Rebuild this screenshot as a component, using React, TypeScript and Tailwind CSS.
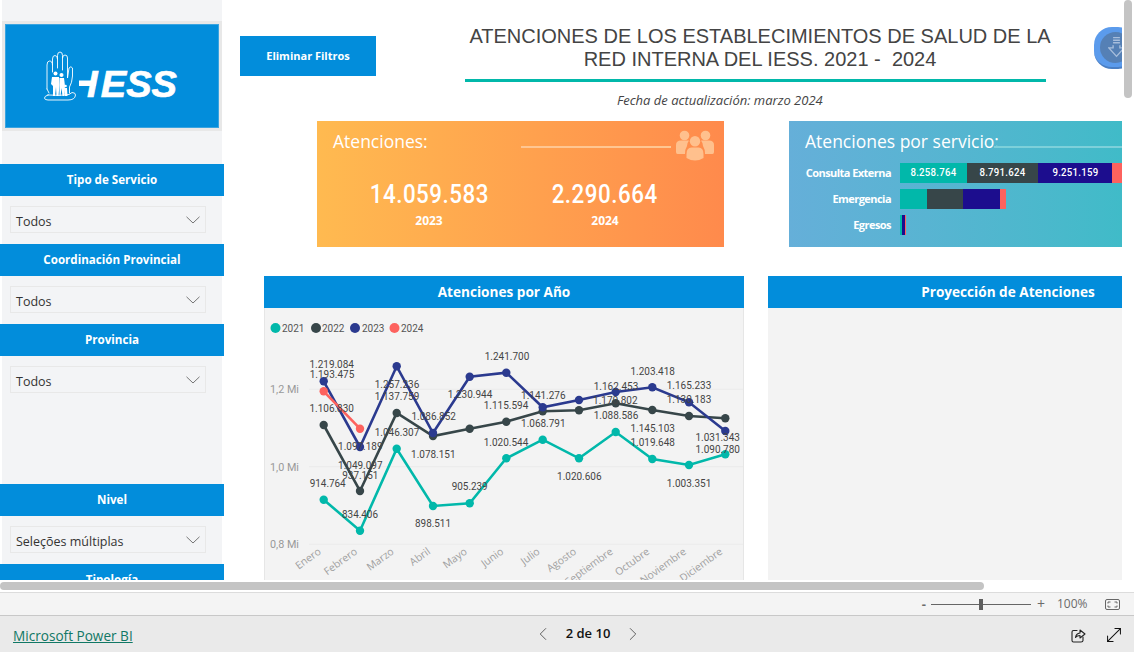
import React from "react";
import { ChevronLeft, ChevronRight, MoveDiagonal } from "lucide-react";

const DIN = "font-['Roboto','Liberation_Sans',sans-serif]";
const X = [323.7, 360, 396.7, 433, 469.7, 506.3, 542.7, 579, 615.7, 652.3, 689, 725.3];
const MONTHS = ["Enero", "Febrero", "Marzo", "Abril", "Mayo", "Junio", "Julio", "Agosto", "Septiembre", "Octubre", "Noviembre", "Diciembre"];
const SERIES = [
  { c: "#01b8aa", y: [499.7, 530.7, 448.7, 506, 503.3, 458.3, 439.7, 458.3, 432, 459, 465, 454.3] },
  { c: "#374649", y: [425, 491, 413, 436, 428.7, 421.7, 411.3, 410.3, 403.3, 410, 416, 418.3] },
  { c: "#2b3a8f", y: [381.3, 447, 366.3, 433, 376.7, 372.7, 407.3, 400, 392, 387.3, 402.3, 431] },
  { c: "#fd625e", y: [391.3, 428.7] },
];
const LABELS: [string, number, number][] = [
  ["1.219.084", 331.7, 364.3], ["1.193.475", 332, 374.3], ["1.106.830", 331.7, 408.3], ["914.764", 327.7, 483.3],
  ["1.097.189", 360.3, 446], ["1.049.097", 360.3, 465.3], ["937.151", 360.3, 474.7], ["834.406", 360, 514.3],
  ["1.257.236", 397, 384], ["1.137.759", 397, 396], ["1.046.307", 397, 432], ["1.086.852", 433.7, 416.3],
  ["1.078.151", 433.3, 454.3], ["898.511", 433, 523.3], ["1.230.944", 470, 394.3], ["905.239", 469.7, 486.3],
  ["1.241.700", 507, 356], ["1.115.594", 506, 405], ["1.020.544", 506, 442], ["1.141.276", 543.3, 395.3],
  ["1.068.791", 543.3, 423.3], ["1.020.606", 579.3, 476.3], ["1.162.453", 616, 386.3], ["1.170.802", 615.3, 400.3],
  ["1.088.586", 616, 415.3], ["1.203.418", 652.7, 371.3], ["1.145.103", 652.7, 428.3], ["1.019.648", 652.7, 442.3],
  ["1.165.233", 689, 385.3], ["1.130.183", 689, 399.3], ["1.003.351", 689, 483.3], ["1.031.343", 717.7, 437.3],
  ["1.090.780", 717.7, 449.3],
];

function Logo() {
  return (
    <svg width="145" height="60" viewBox="0 0 145 60" fill="none">
      <g stroke="#fff" strokeWidth="0.9" strokeLinejoin="round" strokeLinecap="round">
        <path d="M7 43 L7 19 Q7 15 9.5 15 Q12.5 15 12.5 19 M12.5 26 L12.5 13 Q12.5 9.5 15 9.5 Q17.5 9.5 17.5 13 M17.5 22 L17.5 9.5 Q17.5 6 20 6 Q22.5 6 22.5 9.5 L22.5 24 M22.5 12 Q22.5 9 25 9 Q27.5 9 27.5 12 L27.5 32 L29 22 Q31 19.5 32.5 22 L32.5 30 Q32 37 29.5 41 L29.5 47" />
        <path d="M7 43 L9 47" />
        <path d="M8 49 Q4.5 50 4.5 52 Q4.5 54 8 54 L28 54 Q35 54 35.5 49 Q35.5 46.5 32 46.5 L29 48.5 Q20 50 8 49 Z" />
      </g>
      <g fill="#fff">
        <circle cx="15.5" cy="27.5" r="2" />
        <path d="M12 31 L19 31 L19.5 39 L18.5 50 L16.5 50 L16 41 L15 50 L13 50 L13 40 L11 38 Z" />
        <circle cx="21.5" cy="29" r="2" />
        <path d="M19.5 32 L24 32 L25 40 L24 50 L22.5 50 L21.5 42 L20.5 50 L19.5 50 Z" />
        <circle cx="25.5" cy="40" r="1.3" />
        <path d="M24 42 L27 42 L27.5 50 L24.5 50 Z" />
      </g>
      <rect x="39" y="34.5" width="17" height="5.5" fill="#fff" />
      <text x="47" y="51" fill="#fff" fontFamily="'Liberation Sans',sans-serif" fontStyle="italic" fontWeight="700" fontSize="36" textLength="90" lengthAdjust="spacingAndGlyphs" stroke="#fff" strokeWidth="0.7">
        I<tspan dx="3">ESS</tspan>
      </text>
    </svg>
  );
}

function Slicer({ title, value, mt = "mt-[10px]" }: { title: string; value: string; mt?: string }) {
  return (
    <div className={mt}>
      <div className="h-[32px] w-[224px] bg-[#028ddb] flex items-center justify-center text-white text-[11.6px] font-bold">{title}</div>
      <div className="mt-[10px] ml-[10px] w-[196px] h-[27px] border border-[#e8e8e8] flex items-center justify-between pl-[5px] pr-[5px] text-[12.5px] text-[#333]">
        <span className="pt-[5px]">{value}</span>
        <svg width="14" height="8" viewBox="0 0 14 8" fill="none" stroke="#666" strokeWidth="0.9">
          <path d="M0.5 0.8 L7 7 L13.5 0.8" />
        </svg>
      </div>
    </div>
  );
}

function Sidebar() {
  return (
    <aside className="w-[224px] h-[580px] shrink-0 overflow-hidden relative">
      <div className="absolute inset-y-0 left-[2px] w-[220px] bg-[#f3f4f6]" />
      <div className="relative pt-[21px]">
        <div className="ml-[2px] w-[220px] h-[110px] bg-[#e8e8e8] p-[3px]">
          <div className="w-full h-full bg-[#028ddb] border border-[#3aa4e0] flex items-center justify-center">
            <Logo />
          </div>
        </div>
        <Slicer title="Tipo de Servicio" value="Todos" mt="mt-[33px]" />
        <Slicer title="Coordinación Provincial" value="Todos" mt="mt-[11px]" />
        <Slicer title="Provincia" value="Todos" mt="mt-[11px]" />
        <Slicer title="Nivel" value="Seleções múltiplas" mt="mt-[91px]" />
        <Slicer title="Tipología" value="Todos" mt="mt-[11px]" />
      </div>
    </aside>
  );
}

function UsersIcon() {
  return (
    <svg width="38" height="32" viewBox="0 0 38 32" className="shrink-0">
      <g fill="#ffc08d">
        <circle cx="8.5" cy="5.5" r="4.8" />
        <circle cx="29.5" cy="5.5" r="4.8" />
        <path d="M0 15 Q0 10.5 5 10.5 L13 10.5 Q11 13 11 16 Q9 19 9 24 L1.5 24 Q0 24 0 22 Z" />
        <path d="M38 15 Q38 10.5 33 10.5 L25 10.5 Q27 13 27 16 Q29 19 29 24 L36.5 24 Q38 24 38 22 Z" />
        <circle cx="19" cy="11.2" r="5.2" />
        <path d="M10.5 24 Q10.5 17.5 15.5 17.5 L22.5 17.5 Q27.5 17.5 27.5 24 L27.5 28 Q19 33 10.5 28 Z" />
      </g>
    </svg>
  );
}

function Kpi({ value, year }: { value: string; year: string }) {
  return (
    <div className="w-[176px] shrink-0 flex flex-col items-center text-white">
      <div className={`${DIN} text-[26px] leading-[30px] font-medium tracking-[0.6px] scale-x-[0.86]`}>{value}</div>
      <div className="text-[12px] leading-[16px] font-bold mt-[4px]">{year}</div>
    </div>
  );
}

function Stack({ segs, label }: { segs: [string, number, string?][]; label: string }) {
  return (
    <div className="flex items-center h-[20px]">
      <div className="w-[111px] pr-[9px] text-right text-white text-[11px] font-bold tracking-[-0.55px] shrink-0">{label}</div>
      <div className="flex h-[20px]">
        {segs.map(([c, w, t], i) => (
          <div key={i} className={`h-full flex items-center justify-center text-white text-[11.5px] font-medium tracking-[0.3px] shrink-0 ${DIN}`} style={{ background: c, width: w }}>
            {t ? <span className="inline-block scale-x-[0.84]">{t}</span> : null}
          </div>
        ))}
      </div>
    </div>
  );
}

function LineChart() {
  return (
    <svg width="480" height="272" viewBox="264 308 480 272" className="block">
      {[389.3, 466.7, 544.3].map((y) => (
        <line key={y} x1="309" x2="743" y1={y} y2={y} stroke="#ebebeb" strokeWidth="1" />
      ))}
      {([["1,2 Mi", 389.3], ["1,0 Mi", 466.7], ["0,8 Mi", 544.3]] as [string, number][]).map(([t, y]) => (
        <text key={t} x="270" y={y + 4} fontSize="11.5" textLength="29" lengthAdjust="spacingAndGlyphs" fill="#999" fontFamily="'Roboto',sans-serif">{t}</text>
      ))}
      {([["2021", 275.5, 282, "#01b8aa"], ["2022", 316, 322, "#374649"], ["2023", 355, 362, "#2b3a8f"], ["2024", 394.5, 401, "#fd625e"]] as [string, number, number, string][]).map(([t, cx, tx, c]) => (
        <g key={t}>
          <circle cx={cx} cy="328" r="5" fill={c} />
          <text x={tx} y="332" fontSize="11" textLength="22.5" lengthAdjust="spacingAndGlyphs" fill="#555" fontFamily="'Roboto',sans-serif">{t}</text>
        </g>
      ))}
      {SERIES.map((s) => (
        <g key={s.c}>
          <polyline points={s.y.map((y, i) => `${X[i]},${y}`).join(" ")} fill="none" stroke={s.c} strokeWidth="2.6" />
          {s.y.map((y, i) => (
            <circle key={i} cx={X[i]} cy={y} r="4.2" fill={s.c} />
          ))}
        </g>
      ))}
      {LABELS.map(([t, x, y]) => (
        <text key={t} x={x} y={y + 4} textAnchor="middle" fontSize="11.5" textLength={t.length > 7 ? 44.5 : 36} lengthAdjust="spacingAndGlyphs" fill="#444" fontFamily="'Roboto',sans-serif">{t}</text>
      ))}
      {MONTHS.map((m, i) => (
        <text key={m} x={X[i] - 2} y="553" textAnchor="end" fontSize="10.4" fill="#a0a0a0" fontFamily="'Open Sans',sans-serif" transform={`rotate(-36 ${X[i] - 2} 553)`}>{m}</text>
      ))}
    </svg>
  );
}

export default function App() {
  return (
    <div className="w-[1134px] h-[652px] overflow-hidden bg-white flex flex-col font-['Open_Sans','Noto_Sans',sans-serif]">
      <div className="h-[580px] flex shrink-0 relative">
        <div className="w-[1122px] h-[580px] overflow-hidden flex shrink-0">
          <Sidebar />
          <main className="w-[898px] shrink-0 overflow-hidden">
            <div className="h-[121px] flex">
              <button className="mt-[36px] ml-[16px] w-[136px] h-[40px] bg-[#028ddb] text-white text-[11px] font-bold shrink-0">Eliminar Filtros</button>
              <div className="ml-[89px] w-[581px] shrink-0 pt-[25px] flex flex-col items-center">
                <div className="ml-[9px] text-center text-[20px] leading-[23px] text-[#444] whitespace-nowrap font-['Liberation_Sans',sans-serif]">
                  ATENCIONES DE LOS ESTABLECIMIENTOS DE SALUD DE LA
                  <br />
                  RED INTERNA DEL IESS. 2021 -&nbsp; 2024
                </div>
                <div className="w-full h-[3px] bg-[#01b8aa] mt-[8px]" />
                <div className="self-start ml-[152px] mt-[9px] text-[13px] leading-[18px] italic text-[#444] whitespace-nowrap">Fecha de actualización: marzo 2024</div>
              </div>
              <div className="ml-[48px] mt-[27px] shrink-0 w-[42px] h-[42px] rounded-[18px] bg-[#5b9bec] border-b-2 border-[#4a7fc4] flex items-center justify-center">
                <div className="w-[31px] h-[31px] rounded-full bg-[#5580b5] flex items-center justify-center">
                  <svg width="17" height="22" viewBox="0 0 20 24" fill="none" stroke="#a8bedc" strokeWidth="1.6" className="ml-[2px]">
                    <path d="M6 1h8M6 4h8M6 7h8M6 10v3H1l9 10 9-10h-5v-3" />
                  </svg>
                </div>
              </div>
            </div>

            <div className="flex pl-[93px] h-[126px]">
              <div className="w-[407px] h-full shrink-0 bg-gradient-to-r from-[#ffba50] to-[#ff8a4c] px-[16px] pt-[8px] text-white">
                <div className="flex items-start h-[35px]">
                  <div className="text-[17.5px] leading-[24px] w-[188px] shrink-0">Atenciones:</div>
                  <div className="w-[150px] h-[2px] mt-[17px] bg-[#ffc692] shrink-0" />
                  <div className="ml-[5px] mt-[1px]"><UsersIcon /></div>
                </div>
                <div className="flex mt-[15px] ml-[8px]">
                  <Kpi value="14.059.583" year="2023" />
                  <Kpi value="2.290.664" year="2024" />
                </div>
              </div>
              <div className="ml-[65px] w-[333px] h-full shrink-0 bg-gradient-to-r from-[#65afd9] to-[#40bbc8] overflow-hidden">
                <div className="flex items-start pl-[16px] pt-[8px] h-[42px]">
                  <div className="text-[17.5px] leading-[24px] text-white whitespace-nowrap shrink-0">Atenciones por servicio:</div>
                  <div className="flex-1 h-[2px] mt-[17px] bg-[#7dd0da] ml-[-5px]" />
                </div>
                <div className="flex flex-col gap-[6px]">
                  <Stack label="Consulta Externa" segs={[["#01b8aa", 67, "8.258.764"], ["#374649", 71, "8.791.624"], ["#1c0d8e", 74, "9.251.159"], ["#fd625e", 10]]} />
                  <Stack label="Emergencia" segs={[["#01b8aa", 27], ["#374649", 36], ["#1c0d8e", 37], ["#fd625e", 6]]} />
                  <Stack label="Egresos" segs={[["#01b8aa", 1.5], ["#374649", 0.5], ["#1c0d8e", 2.5], ["#fd625e", 0.5]]} />
                </div>
              </div>
            </div>

            <div className="flex pl-[40px] mt-[29px]">
              <div className="w-[480px] shrink-0">
                <div className="h-[32px] bg-[#028ddb] flex items-center justify-center text-white text-[13.6px] font-bold">Atenciones por Año</div>
                <div className="h-[272px] bg-[#f3f3f3] border-x border-[#e6e6e6]">
                  <div className="ml-[-1px]"><LineChart /></div>
                </div>
              </div>
              <div className="ml-[24px] w-[480px] shrink-0">
                <div className="h-[32px] bg-[#028ddb] flex items-center justify-center text-white text-[13.6px] font-bold">Proyección de Atenciones</div>
                <div className="h-[272px] bg-[#f3f3f3]" />
              </div>
            </div>
          </main>
        </div>
        <div className="absolute right-[2px] top-0 w-[8px] h-[98px] rounded-[4px] bg-[#c4c4c4]" />
      </div>

      <div className="h-[12px] shrink-0 pt-[2px]">
        <div className="w-[984px] h-[8px] rounded-[4px] bg-[#c4c4c4]" />
      </div>

      <div className="h-[24px] shrink-0 bg-[#f4f4f4] border-y border-[#dcdcdc] border-b-[#c8c8c8] flex items-center justify-end text-[#6b6b6b]">
        <span className="text-[13px] font-bold leading-none mr-[5px]">-</span>
        <div className="w-[100px] h-[1px] bg-[#666] relative mr-[6px]">
          <div className="absolute left-[48px] top-[-5px] w-[4px] h-[11px] bg-[#5f5f5f]" />
        </div>
        <span className="text-[14px] leading-none mr-[12px]">+</span>
        <span className="text-[12px] w-[30px] mr-[18px]">100%</span>
        <svg width="15" height="11" viewBox="0 0 15 11" fill="none" stroke="#666" strokeWidth="1" className="mr-[14px]">
          <rect x="0.5" y="0.5" width="14" height="10" rx="1.5" />
          <path d="M3 4.5V3h2.5M12 4.5V3H9.5M3 6.5V8h2.5M12 6.5V8H9.5" />
        </svg>
      </div>

      <div className="h-[36px] shrink-0 bg-[#eaeaea] relative flex items-center justify-center">
        <a className="absolute left-[13px] top-[11px] text-[13.6px] leading-[18px] underline text-[#117865]">Microsoft Power BI</a>
        <div className="flex items-center gap-[12px] ml-[42px] text-[#111]">
          <ChevronLeft size={22} strokeWidth={1} color="#555" />
          <span className="text-[13px] font-semibold">2 de 10</span>
          <ChevronRight size={22} strokeWidth={1} color="#555" />
        </div>
        <div className="absolute right-[9px] top-[8px] flex items-center gap-[17px]">
          <svg width="15" height="15" viewBox="0 0 15 15" fill="none" stroke="#222" strokeWidth="1.1" strokeLinejoin="round" strokeLinecap="round">
            <path d="M6 2.5H2.5Q1 2.5 1 4V12.5Q1 14 2.5 14H10Q12 14 12 12.5V9" />
            <path d="M4.5 9.5Q5 5.5 9 5V2L14 6L9 10V7.5Q6 7.5 4.5 9.5Z" />
          </svg>
          <MoveDiagonal size={22} strokeWidth={1.1} color="#111" />
        </div>
      </div>
    </div>
  );
}
